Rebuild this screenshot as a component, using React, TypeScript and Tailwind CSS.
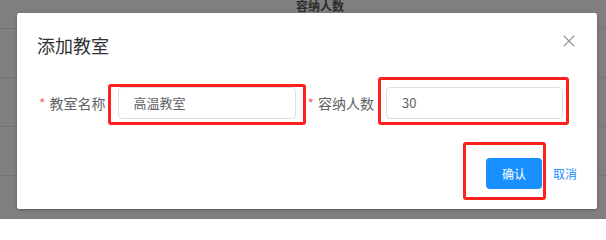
import { X } from "lucide-react";

const rows = [29, 49, 49, 49, 49];

function Field({ label, value, width }: { label: string; value: string; width: string }) {
  return (
    <div className="flex items-center gap-[12px]">
      <label className="text-[14px] leading-[32px] text-[#606266] whitespace-nowrap">
        <span className="text-[#f56c6c] mr-[4px]">*</span>
        {label}
      </label>
      <div className={`${width} h-[32px] border border-[#dcdfe6] rounded-[4px] flex items-center px-[15px] text-[13px] text-[#606266]`}>
        {value}
      </div>
    </div>
  );
}

export default function App() {
  return (
    <div
      className="relative w-[606px] h-[219px] overflow-hidden bg-[#7f7f7f]"
      style={{ fontFamily: '"Noto Sans CJK SC", "Noto Sans", sans-serif' }}
    >
      {/* table behind the mask */}
      <div className="flex flex-col">
        {rows.map((h, i) => (
          <div key={i} className="border-b border-[#737373] flex" style={{ height: h }}>
            {i === 0 && (
              <span className="ml-[296px] mt-0 text-[12px] leading-[12px] font-bold text-[#2b2b2b]">容纳人数</span>
            )}
          </div>
        ))}
      </div>

      {/* dialog */}
      <div className="absolute left-[17px] top-[13px] w-[580px] h-[196px] bg-white rounded-[2px] shadow-[0_1px_3px_rgba(0,0,0,0.3)]">
        <div className="flex items-start justify-between pl-[20px] pr-[18px] pt-[20px]">
          <h2 className="text-[18px] leading-[24px] text-[#303133]">添加教室</h2>
          <X className="w-[20px] h-[20px] text-[#909399] -mt-[2px]" strokeWidth={1.3} />
        </div>
        <div className="flex items-center gap-[12px] pl-[22px] mt-[30px]">
          <Field label="教室名称" value="高温教室" width="w-[178px]" />
          <Field label="容纳人数" value="30" width="w-[177px]" />
        </div>
        <div className="flex items-center justify-end pr-[20px] mt-[39px] gap-[11px]">
          <button className="w-[56px] h-[31px] rounded-[4px] bg-[#1890ff] text-white text-[12px]">确认</button>
          <button className="text-[12px] text-[#1890ff]">取消</button>
        </div>
      </div>

      {/* red annotation boxes */}
      <div className="absolute left-[108px] top-[84px] w-[198px] h-[41px] border-[3px] border-[#ff1f1f] rounded-[3px]" />
      <div className="absolute left-[378px] top-[77px] w-[191px] h-[48px] border-[3px] border-[#ff1f1f] rounded-[3px]" />
      <div className="absolute left-[463px] top-[142px] w-[83px] h-[58px] border-[3px] border-[#ff1f1f] rounded-[3px]" />
    </div>
  );
}
